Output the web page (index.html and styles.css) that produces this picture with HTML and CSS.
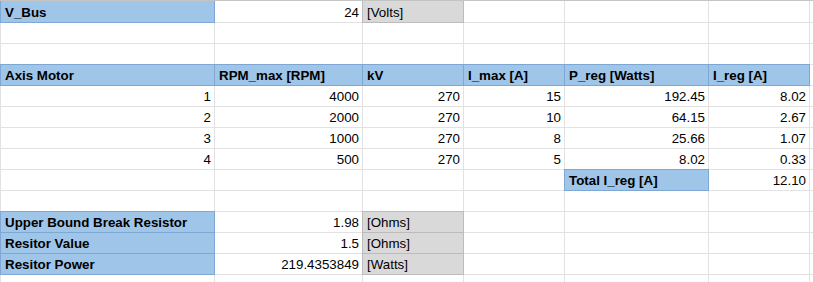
FILE: index.html
```html
<!DOCTYPE html>
<html>
<head>
<meta charset="utf-8">
<link rel="stylesheet" href="styles.css">
</head>
<body>
<div class="sheet">
  <div class="c hd">V_Bus</div><div class="c n">24</div><div class="c unit">[Volts]</div><div class="c"></div><div class="c"></div><div class="c"></div><div class="c"></div>
  <div class="c"></div><div class="c"></div><div class="c"></div><div class="c"></div><div class="c"></div><div class="c"></div><div class="c"></div>
  <div class="c"></div><div class="c"></div><div class="c"></div><div class="c"></div><div class="c"></div><div class="c"></div><div class="c"></div>
  <div class="c hd">Axis Motor</div><div class="c hd">RPM_max [RPM]</div><div class="c hd">kV</div><div class="c hd">I_max [A]</div><div class="c hd">P_reg [Watts]</div><div class="c hd">I_reg [A]</div><div class="c"></div>
  <div class="c n">1</div><div class="c n">4000</div><div class="c n">270</div><div class="c n">15</div><div class="c n">192.45</div><div class="c n">8.02</div><div class="c"></div>
  <div class="c n">2</div><div class="c n">2000</div><div class="c n">270</div><div class="c n">10</div><div class="c n">64.15</div><div class="c n">2.67</div><div class="c"></div>
  <div class="c n">3</div><div class="c n">1000</div><div class="c n">270</div><div class="c n">8</div><div class="c n">25.66</div><div class="c n">1.07</div><div class="c"></div>
  <div class="c n">4</div><div class="c n">500</div><div class="c n">270</div><div class="c n">5</div><div class="c n">8.02</div><div class="c n">0.33</div><div class="c"></div>
  <div class="c"></div><div class="c"></div><div class="c"></div><div class="c"></div><div class="c hd">Total I_reg [A]</div><div class="c n">12.10</div><div class="c"></div>
  <div class="c"></div><div class="c"></div><div class="c"></div><div class="c"></div><div class="c"></div><div class="c"></div><div class="c"></div>
  <div class="c hd">Upper Bound Break Resistor</div><div class="c n">1.98</div><div class="c unit">[Ohms]</div><div class="c"></div><div class="c"></div><div class="c"></div><div class="c"></div>
  <div class="c hd">Resitor Value</div><div class="c n">1.5</div><div class="c unit">[Ohms]</div><div class="c"></div><div class="c"></div><div class="c"></div><div class="c"></div>
  <div class="c hd">Resitor Power</div><div class="c n">219.4353849</div><div class="c unit">[Watts]</div><div class="c"></div><div class="c"></div><div class="c"></div><div class="c"></div>
  <div class="c"></div><div class="c"></div><div class="c"></div><div class="c"></div><div class="c"></div><div class="c"></div><div class="c"></div>
</div>
</body>
</html>
```

FILE: styles.css
```css
html, body {
  margin: 0;
  padding: 0;
  background: #ffffff;
  overflow: hidden;
}

.sheet {
  box-sizing: border-box;
  display: grid;
  grid-template-columns: 213px 147px 100px 100px 143px 100px 1fr;
  grid-template-rows: 21px repeat(12, 20px) 1fr;
  gap: 1px;
  padding-left: 1px;
  border-top: 1px solid #c4c4c4;
  background: #e2e2e2;
  width: 813px;
  height: 282px;
  overflow: hidden;
  font-family: "Liberation Sans", Arial, sans-serif;
  font-size: 13.33px;
  color: #000000;
}

.c {
  background: #ffffff;
  display: flex;
  align-items: flex-end;
  padding: 0 3px 2px 4px;
  line-height: 15px;
  white-space: nowrap;
  overflow: hidden;
}

.n {
  justify-content: flex-end;
}

.hd {
  background: #9fc5e8;
  font-weight: bold;
  outline: 1px solid #7fa7d3;
}

.unit {
  background: #d9d9d9;
  outline: 1px solid #bcbcbc;
}
```
